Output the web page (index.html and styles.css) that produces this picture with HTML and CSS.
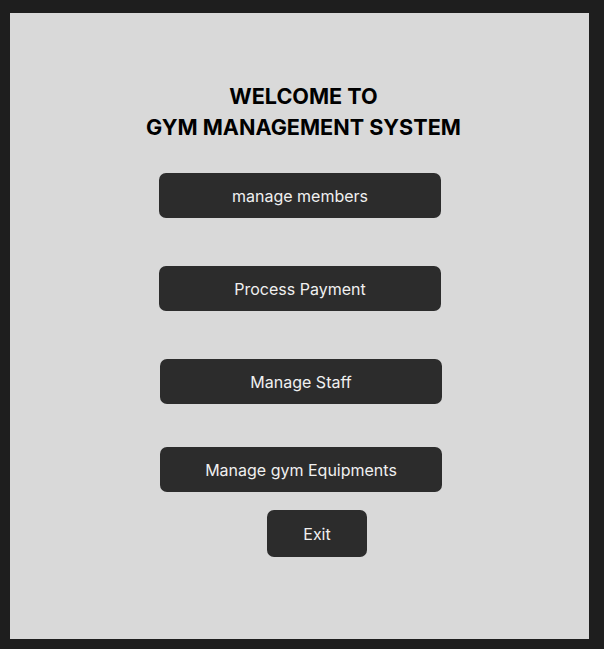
FILE: index.html
```html
<!DOCTYPE html>
<html>
<head>
<meta charset="utf-8">
<link rel="stylesheet" href="styles.css">
</head>
<body>
<main class="panel">
  <h1 class="title">WELCOME TO<br>GYM MANAGEMENT SYSTEM</h1>
  <div class="menu">
    <button class="btn btn-a btn-first">manage members</button>
    <button class="btn btn-a btn-gap">Process Payment</button>
    <button class="btn btn-b btn-gap">Manage Staff</button>
    <button class="btn btn-b btn-gap2">Manage gym Equipments</button>
    <button class="btn btn-exit">Exit</button>
  </div>
</main>
</body>
</html>
```
FILE: styles.css
```css
html, body {
  margin: 0;
  padding: 0;
  background: #1e1e1e;
  width: 604px;
  height: 649px;
  overflow: hidden;
}
body {
  padding-top: 13px;
  padding-left: 10px;
  box-sizing: border-box;
  font-family: Inter, "Noto Sans", sans-serif;
}
.panel {
  width: 579px;
  height: 626px;
  background: #d9d9d9;
  box-sizing: border-box;
  padding-top: 68px;
}
.title {
  margin: 0;
  padding-left: 8px;
  text-align: center;
  font-size: 21.6px;
  font-weight: 700;
  line-height: 31px;
  color: #000;
}
.menu {
  display: flex;
  flex-direction: column;
  align-items: flex-start;
}
.btn {
  border: none;
  background: #2c2c2c;
  color: #f0f0f0;
  font-family: Inter, "Noto Sans", sans-serif;
  font-size: 16px;
  font-weight: 400;
  width: 282px;
  height: 45px;
  border-radius: 7px;
  padding: 0;
}
.btn-a { margin-left: 149px; }
.btn-b { margin-left: 150px; }
.btn-first { margin-top: 30px; }
.btn-gap { margin-top: 48px; }
.btn-gap2 { margin-top: 43px; }
.btn-exit {
  margin-left: 257px;
  margin-top: 18px;
  width: 100px;
  height: 47px;
}
```
